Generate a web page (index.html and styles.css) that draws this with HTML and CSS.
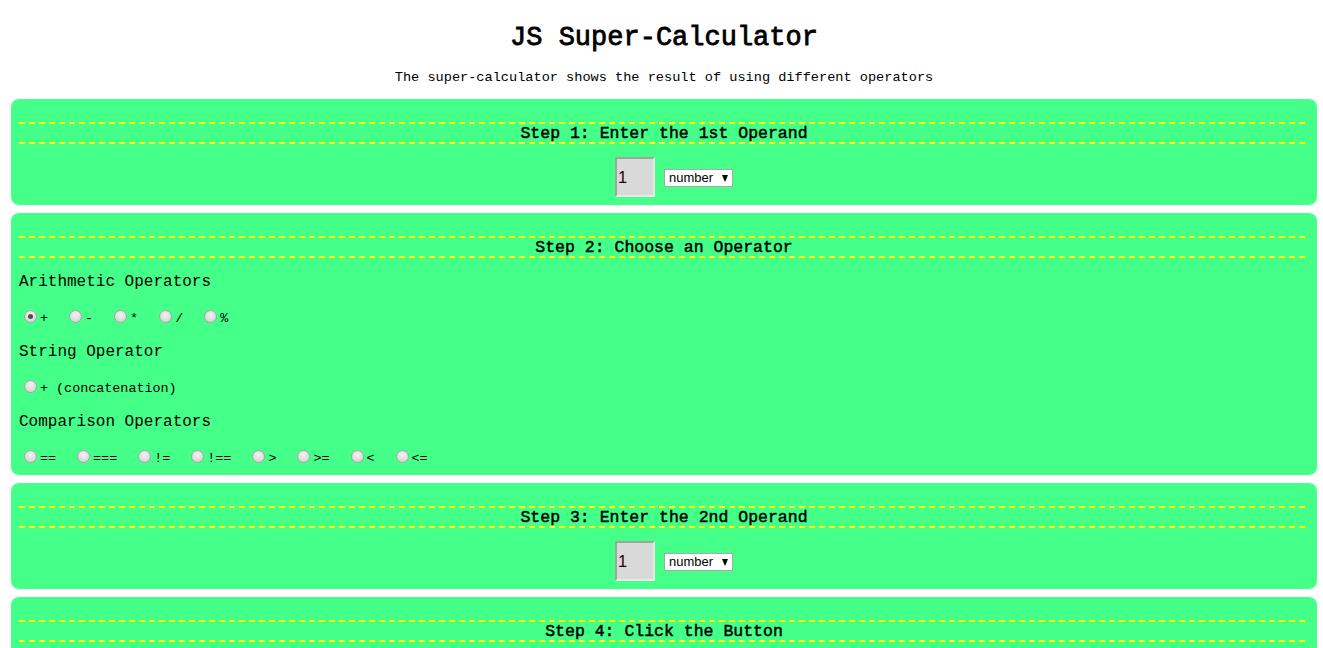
FILE: index.html
```html
<!DOCTYPE html>
<html lang="en">
<head>
<meta charset="utf-8">
<title>JS Super-Calculator</title>
<link rel="stylesheet" href="styles.css">
</head>
<body>
<header class="page-head">
  <h1 class="title">JS Super-Calculator</h1>
  <p class="subtitle">The super-calculator shows the result of using different operators</p>
</header>

<section class="panel">
  <h2 class="step">Step 1: Enter the 1st Operand</h2>
  <div class="operand-row">
    <input class="operand" type="text" value="1">
    <span class="select-wrap"><select class="type"><option>number</option><option>string</option><option>boolean</option></select></span>
  </div>
</section>

<section class="panel">
  <h2 class="step">Step 2: Choose an Operator</h2>
  <p class="group-label first">Arithmetic Operators</p>
  <div class="radio-row">
    <label class="opt"><input class="radio" type="radio" name="op" checked><span class="opt-text">+</span></label>
    <label class="opt"><input class="radio" type="radio" name="op"><span class="opt-text">-</span></label>
    <label class="opt"><input class="radio" type="radio" name="op"><span class="opt-text">*</span></label>
    <label class="opt"><input class="radio" type="radio" name="op"><span class="opt-text">/</span></label>
    <label class="opt"><input class="radio" type="radio" name="op"><span class="opt-text">%</span></label>
  </div>
  <p class="group-label">String Operator</p>
  <div class="radio-row">
    <label class="opt"><input class="radio" type="radio" name="op"><span class="opt-text">+ (concatenation)</span></label>
  </div>
  <p class="group-label">Comparison Operators</p>
  <div class="radio-row">
    <label class="opt"><input class="radio" type="radio" name="op"><span class="opt-text">==</span></label>
    <label class="opt"><input class="radio" type="radio" name="op"><span class="opt-text">===</span></label>
    <label class="opt"><input class="radio" type="radio" name="op"><span class="opt-text">!=</span></label>
    <label class="opt"><input class="radio" type="radio" name="op"><span class="opt-text">!==</span></label>
    <label class="opt"><input class="radio" type="radio" name="op"><span class="opt-text">&gt;</span></label>
    <label class="opt"><input class="radio" type="radio" name="op"><span class="opt-text">&gt;=</span></label>
    <label class="opt"><input class="radio" type="radio" name="op"><span class="opt-text">&lt;</span></label>
    <label class="opt"><input class="radio" type="radio" name="op"><span class="opt-text">&lt;=</span></label>
  </div>
</section>

<section class="panel">
  <h2 class="step">Step 3: Enter the 2nd Operand</h2>
  <div class="operand-row">
    <input class="operand" type="text" value="1">
    <span class="select-wrap"><select class="type"><option>number</option><option>string</option><option>boolean</option></select></span>
  </div>
</section>

<section class="panel">
  <h2 class="step">Step 4: Click the Button</h2>
  <div class="button-row">
    <button class="calc" type="button">Calculate</button>
  </div>
</section>

<section class="panel">
  <h2 class="step">Step 5: See the Result</h2>
  <p class="result">1 + 1 = 2</p>
</section>
</body>
</html>
```
FILE: styles.css
```css
html, body {
  background: #ffffff;
}

body {
  margin: 0 6px 0 11px;
  font-family: "Liberation Mono", "Courier New", monospace;
  color: #000000;
}

.page-head {
  text-align: center;
}

.title {
  margin: 22px 0 0;
  font-size: 27px;
  line-height: 32px;
  font-weight: normal;
  -webkit-text-stroke: 0.8px #000000;
}

.subtitle {
  margin: 16px 0 13px;
  font-size: 13.6px;
  line-height: 16px;
}

.panel {
  background: #44ff88;
  border-radius: 8px;
  padding: 8px;
  margin-bottom: 8px;
}

.step {
  margin: 15px 0 0;
  padding: 3px 0 1px;
  font-size: 16.5px;
  line-height: 18px;
  font-weight: normal;
  -webkit-text-stroke: 0.45px #000000;
  text-align: center;
  background-image:
    repeating-linear-gradient(90deg, #ffff00 0 6px, transparent 6px 10px),
    repeating-linear-gradient(90deg, #ffff00 0 6px, transparent 6px 10px);
  background-size: 100% 2px, 100% 2px;
  background-position: left top, left bottom;
  background-repeat: no-repeat;
}

.operand-row {
  display: flex;
  justify-content: center;
  align-items: center;
  gap: 9px;
  margin-top: 13px;
  padding-left: 20px;
  height: 40px;
}

.operand {
  box-sizing: border-box;
  width: 40px;
  height: 40px;
  margin: 0;
  padding: 0 0 0 1px;
  background: #d9d9d9;
  border-style: solid;
  border-width: 2px;
  border-color: #a3a3a3 #e9e9e9 #e9e9e9 #a3a3a3;
  font-family: "Liberation Sans", Arial, sans-serif;
  font-size: 16.5px;
  color: #2a0000;
  outline: none;
}

.select-wrap {
  position: relative;
  display: inline-block;
  margin-top: 2px;
}

.select-wrap::after {
  content: "";
  position: absolute;
  right: 5px;
  top: 6px;
  width: 0;
  height: 0;
  border-left: 3.5px solid transparent;
  border-right: 3.5px solid transparent;
  border-top: 7px solid #000000;
  pointer-events: none;
}

.type {
  -webkit-appearance: none;
  appearance: none;
  box-sizing: border-box;
  width: 69px;
  height: 18px;
  margin: 0;
  padding: 0 0 0 4px;
  background: #ffffff;
  border: 1px solid #a9a9a9;
  border-radius: 0;
  font-family: "Liberation Sans", Arial, sans-serif;
  font-size: 13px;
  line-height: 16px;
  color: #000000;
}

.group-label {
  margin: 15px 0 0;
  font-size: 16px;
  line-height: 21px;
}

.group-label.first {
  margin-top: 14px;
}

.radio-row {
  display: flex;
  align-items: center;
  margin-top: 13px;
  height: 21px;
  font-size: 13.4px;
}

.opt {
  display: flex;
  align-items: center;
  margin-right: 16px;
}

.opt-text {
  padding-top: 5px;
  line-height: 16px;
  white-space: pre;
}

.radio {
  -webkit-appearance: none;
  appearance: none;
  box-sizing: border-box;
  width: 13px;
  height: 13px;
  margin: 0 3px 0 5px;
  border-radius: 50%;
  border: 1px solid #a6a6a6;
  background: radial-gradient(circle at 50% 35%, #f2f2f2 0, #dcdcdc 60%, #cfcfcf 100%);
  position: relative;
}

.radio:checked::after {
  content: "";
  position: absolute;
  left: 3px;
  top: 3px;
  width: 5px;
  height: 5px;
  border-radius: 50%;
  background: #4d4d4d;
}

.button-row {
  display: flex;
  justify-content: center;
  margin-top: 13px;
}

.calc {
  font-family: "Liberation Sans", Arial, sans-serif;
  font-size: 13.3px;
  padding: 2px 8px;
}

.result {
  margin: 13px 0 0;
  text-align: center;
  font-size: 16px;
}
```
